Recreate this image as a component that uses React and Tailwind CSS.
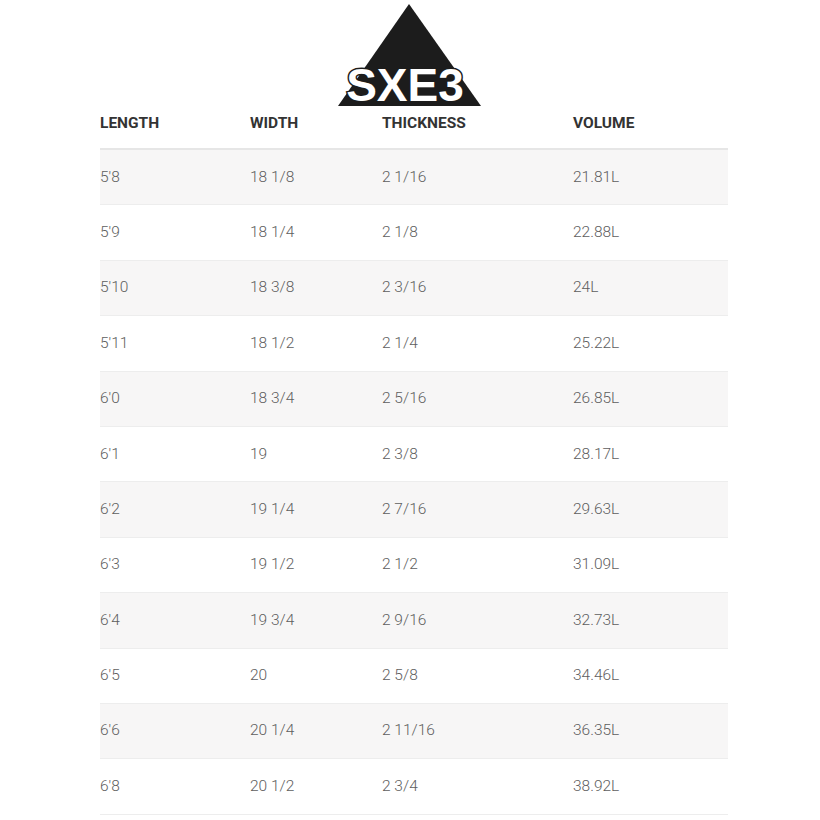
const rows = [
  ["5'8", "18 1/8", "2 1/16", "21.81L"],
  ["5'9", "18 1/4", "2 1/8", "22.88L"],
  ["5'10", "18 3/8", "2 3/16", "24L"],
  ["5'11", "18 1/2", "2 1/4", "25.22L"],
  ["6'0", "18 3/4", "2 5/16", "26.85L"],
  ["6'1", "19", "2 3/8", "28.17L"],
  ["6'2", "19 1/4", "2 7/16", "29.63L"],
  ["6'3", "19 1/2", "2 1/2", "31.09L"],
  ["6'4", "19 3/4", "2 9/16", "32.73L"],
  ["6'5", "20", "2 5/8", "34.46L"],
  ["6'6", "20 1/4", "2 11/16", "36.35L"],
  ["6'8", "20 1/2", "2 3/4", "38.92L"],
];

const cols = ["w-[150px]", "w-[132px]", "w-[191px]", "flex-1"];

function Logo() {
  return (
    <svg width="146" height="106" viewBox="0 0 146 106" className="block overflow-visible">
      <polygon points="71,4 143,106 0,106" fill="#1c1c1c" />
      <text
        x="67"
        y="101"
        textAnchor="middle"
        fontFamily="'Liberation Sans', Arial, sans-serif"
        fontWeight="bold"
        fontSize="46"
        fill="#fff"
        stroke="#1c1c1c"
        strokeWidth="3"
        paintOrder="stroke"
      >
        SXE3
      </text>
    </svg>
  );
}

export default function App() {
  return (
    <div className="min-h-[820px] w-[820px] bg-white font-['Roboto',sans-serif]">
      <div className="flex justify-center pl-[8px]">
        <div className="ml-[-6px]">
          <Logo />
        </div>
      </div>
      <div className="ml-[100px] w-[628px]">
        <div className="flex h-[44px] items-start border-b-2 border-[#e6e6e6] pt-[6px] text-[15.5px] font-bold text-[#333]">
          {["LENGTH", "WIDTH", "THICKNESS", "VOLUME"].map((h, i) => (
            <div key={h} className={cols[i]}>
              {h}
            </div>
          ))}
        </div>
        {rows.map((r, idx) => (
          <div
            key={idx}
            className={[
              "flex h-[55.4px] items-center border-b border-[#ededed] text-[15.5px] font-light text-[#5e5e5e]",
              idx % 2 === 0 ? "bg-[#f7f6f6]" : "bg-white",
            ].join(" ")}
          >
            {r.map((c, i) => (
              <div key={i} className={cols[i]}>
                {c}
              </div>
            ))}
          </div>
        ))}
      </div>
    </div>
  );
}
